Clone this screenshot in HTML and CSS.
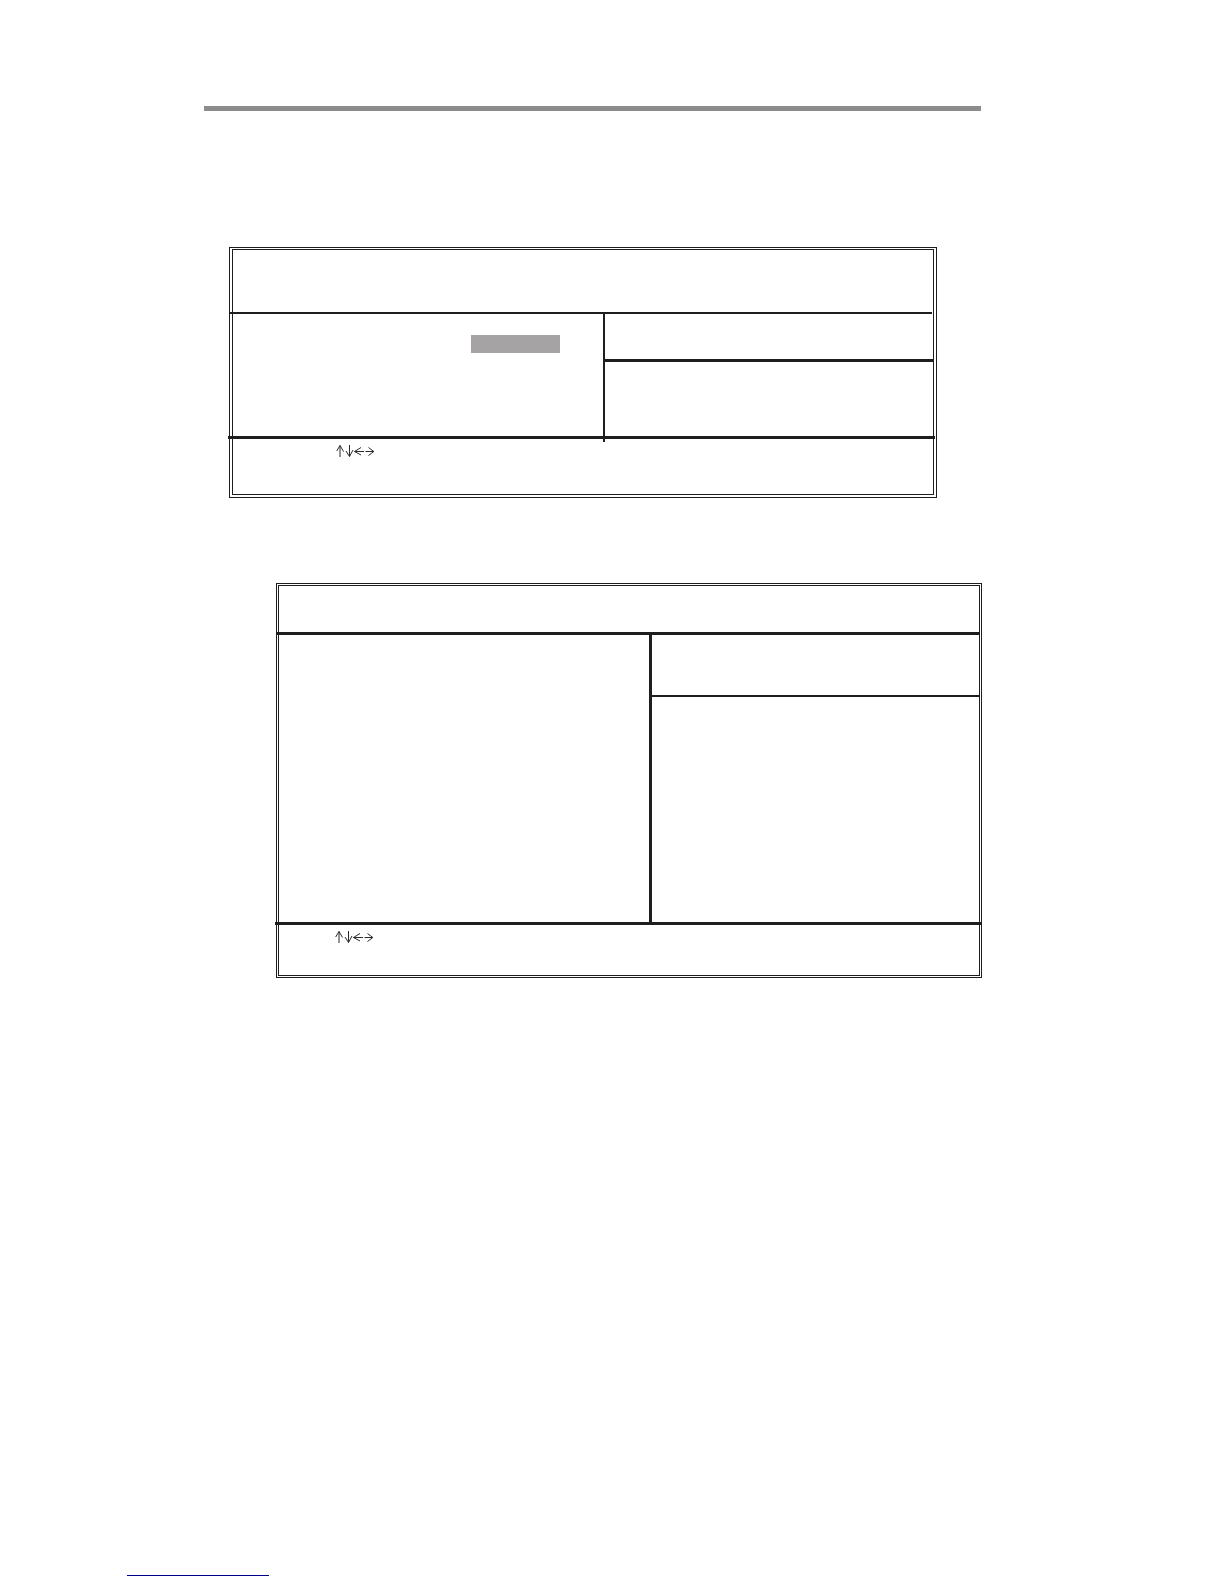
FILE: index.html
```html
<!DOCTYPE html>
<html lang="en">
<head>
    <meta charset="UTF-8">
    <meta name="viewport" content="width=device-width, initial-scale=1.0">
    <title>Setup Screens</title>
    <link rel="stylesheet" href="styles.css">
</head>
<body>

    <!-- Arrow keys, shared by both screens -->
    <svg class="symbols" aria-hidden="true">
        <symbol id="arrow-keys" viewBox="0 0 39 12">
            <path d="M4 12V.5M.7 6 4 .5l3.5 6"/>
            <path d="M13.5 0v11.5M10 6l3.5 5.5L17 5"/>
            <path d="M28 6.5h-9.5M25 2.5l-6.5 4 6.5 3.5"/>
            <path d="M29.5 6.5h8.3M32.5 2.5l5.3 4-5.3 4"/>
        </symbol>
    </svg>

    <main>
        <hr class="top-rule">

        <section class="screen main-screen">
            <div class="screen-inner">
                <div class="screen-title"></div>
                <div class="screen-body">
                    <div class="options">
                        <div class="selected"></div>
                    </div>
                    <div class="help">
                        <div class="help-title"></div>
                    </div>
                </div>
                <div class="screen-keys">
                    <svg class="arrows"><use href="#arrow-keys"/></svg>
                </div>
            </div>
        </section>

        <section class="screen sub-screen">
            <div class="screen-inner">
                <div class="screen-title"></div>
                <div class="screen-body">
                    <div class="options"></div>
                    <div class="help">
                        <div class="help-title"></div>
                    </div>
                </div>
                <div class="screen-keys">
                    <svg class="arrows"><use href="#arrow-keys"/></svg>
                </div>
            </div>
        </section>
    </main>

    <footer>
        <a href="#" class="footer-link" aria-label="Website"></a>
    </footer>

</body>
</html>
```
FILE: styles.css
```css
* {
    box-sizing: border-box;
}

body {
    margin: 0;
    min-height: 100vh;
    display: flex;
    flex-direction: column;
    background-color: #fff;
    font-family: "Liberation Sans", Arial, sans-serif;
}

main {
    padding: 106px 242px 0 204px;
}

.symbols {
    display: none;
}

.top-rule {
    height: 5px;
    margin: 0 1px 136px 0;
    border: none;
    background-color: #8c8c8c;
}

/* Double frame round each screen */
.screen {
    border: 1px solid #1f1d1e;
    padding: 1px;
}

.screen-inner {
    border: 1px solid #1f1d1e;
}

.screen-body {
    display: grid;
}

.options {
    position: relative;
    border-right: 3px solid #1f1d1e;
}

.help-title {
    border-bottom: 2px solid #1f1d1e;
}

.screen-title {
    border-bottom: 3px solid #1f1d1e;
}

.screen-keys {
    border-top: 3px solid #1f1d1e;
    padding-top: 6px;
}

.arrows {
    display: block;
    width: 39px;
    height: 12px;
    fill: none;
    stroke: #2a2a2a;
    stroke-width: 1;
}

/* First screen */
.main-screen {
    margin: 0 45px 85px 25px;
    padding: 1px 2px 2px;
}

.main-screen .screen-title {
    height: 64px;
    margin: 0 1px 0 -3px;
    border-bottom-width: 2px;
}

.main-screen .screen-body {
    grid-template-columns: 372fr 328fr;
    height: 122px;
}

.main-screen .options {
    border-right-width: 2px;
    padding: 21px 0 0 238px;
}

/* the divider runs a little past the bottom line */
.main-screen .options::after {
    content: "";
    position: absolute;
    right: -2px;
    bottom: -6px;
    width: 2px;
    height: 6px;
    background-color: #1f1d1e;
}

.selected {
    width: 89px;
    height: 18px;
    background-color: #a5a3a4;
}

.main-screen .help-title {
    height: 48px;
    border-bottom-width: 3px;
}

.main-screen .screen-keys {
    height: 58px;
    margin: 0 -2px 0 -5px;
    padding-left: 108px;
}

/* Second screen */
.sub-screen {
    margin-left: 72px;
}

.sub-screen .screen-title {
    height: 49px;
    margin: 0 -1px 0 -2px;
}

.sub-screen .screen-body {
    grid-template-columns: 373fr 327fr;
    height: 287px;
}

.sub-screen .help-title {
    height: 62px;
}

.sub-screen .screen-keys {
    height: 53px;
    margin: 0 -3px 0 -4px;
    padding-left: 60px;
}

footer {
    margin-top: auto;
    padding: 0 127px 8px;
}

.footer-link {
    display: block;
    width: 142px;
    height: 16px;
    border-bottom: 1px solid #00008b;
}
```
